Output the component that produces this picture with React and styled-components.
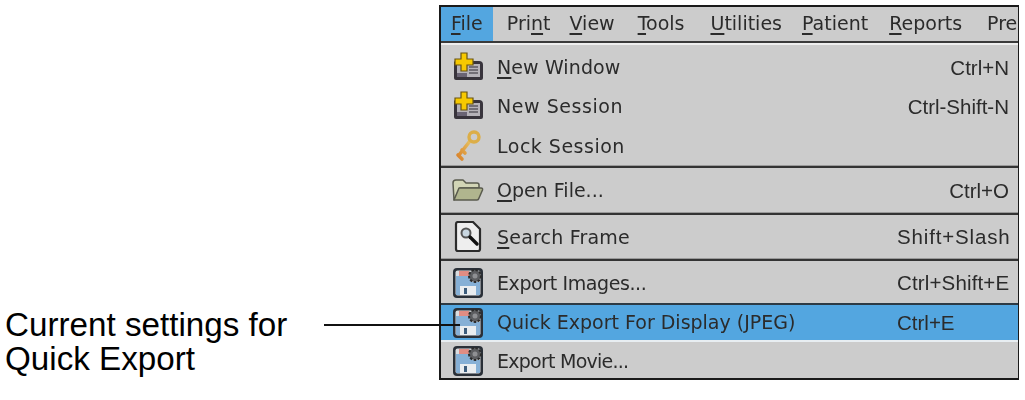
import React from 'react'
import styled, { createGlobalStyle } from 'styled-components'

const GlobalStyle = createGlobalStyle`
  html, body {
    margin: 0;
    padding: 0;
    background: #fff;
  }
`

const colors = {
  panel: '#cccccc',
  select: '#53a6e0',
  text: '#2b2b2b',
  line: '#1a1a1a',
}

const Page = styled.div`
  position: relative;
  width: 1025px;
  height: 400px;
  overflow: hidden;
  display: flex;
  align-items: flex-start;
  justify-content: space-between;
  padding: 5px 6px 0 5px;
  box-sizing: border-box;
  background: #fff;
`

const Caption = styled.div`
  margin-top: 303px;
  font-family: "Liberation Sans", Arial, sans-serif;
  font-size: 33.2px;
  line-height: 34px;
  color: #000;
`

const Leader = styled.div`
  position: absolute;
  left: 324px;
  top: 324px;
  width: 136px;
  height: 2px;
  background: #111;
  z-index: 2;
`

const Menu = styled.div`
  width: 580px;
  height: 375px;
  box-sizing: border-box;
  border: 2px solid ${colors.line};
  border-right-width: 1px;
  background: ${colors.panel};
  display: flex;
  flex-direction: column;
  overflow: hidden;
`

const MenuBar = styled.div`
  display: flex;
  height: 34px;
  flex: none;
  white-space: nowrap;
  border-bottom: 2px solid #3a3a3a;
  box-shadow: 0 2px 0 #eeeeee;
`

const BarItem = styled.div`
  flex: none;
  padding: 0 ${p => p.$right}px 2px ${p => p.$left}px;
  display: flex;
  align-items: center;
  font-family: "DejaVu Sans", sans-serif;
  font-size: 19px;
  color: ${colors.text};
  filter: blur(0.35px);
  background: ${p => (p.$active ? colors.select : 'transparent')};
`

const Key = styled.span`
  text-decoration: underline;
  text-underline-offset: 3px;
  text-decoration-thickness: 2px;
`

const Group = styled.div`
  padding-top: ${p => p.$top || 0}px;
  border-bottom: ${p => (p.$last ? 'none' : '2px solid #333333')};
  box-shadow: ${p => (p.$last ? 'none' : 'inset 0 -1px 0 #999')};
  display: flex;
  flex-direction: column;
`

const Row = styled.div`
  display: flex;
  align-items: center;
  flex: none;
  height: ${p => p.$h || 39}px;
  padding-left: 11px;
  background: ${p => (p.$selected ? colors.select : 'transparent')};
  box-shadow: ${p => (p.$selected ? 'inset 0 -2px 0 #e8eef2, inset 0 2px 0 #2d3a44' : 'none')};
`

const IconBox = styled.div`
  width: 32px;
  height: 32px;
  flex: none;
  margin-right: 13px;
  filter: blur(0.4px);
  svg {
    display: block;
  }
`

const Label = styled.div`
  width: 400px;
  flex: none;
  padding-bottom: 1px;
  font-family: "DejaVu Sans", sans-serif;
  font-size: 19px;
  letter-spacing: ${p => p.$track || 0}px;
  color: ${colors.text};
  filter: blur(0.35px);
  white-space: nowrap;
`

const Shortcut = styled.div`
  flex: 1;
  padding-right: 9px;
  text-align: ${p => (p.$left ? 'left' : 'right')};
  font-family: "Liberation Sans", Arial, sans-serif;
  font-size: 20.5px;
  letter-spacing: ${p => p.$track || 0}px;
  color: ${colors.text};
  filter: blur(0.25px);
  white-space: nowrap;
`

const PlusIcon = () => (
  <svg width="32" height="32" viewBox="0 0 32 32">
    <path d="M3 9h24a4 4 0 0 1 4 4v13a2 2 0 0 1-2 2H4a2 2 0 0 1-2-2V10z" fill="#38343c" />
    <rect x="5" y="12" width="23" height="13" fill="#b5b2b8" />
    <path d="M17 15h9M17 18h9M17 21h9" stroke="#5c5960" strokeWidth="1.5" />
    <path d="M5 21h10v4H5z" fill="#6a6474" />
    <path d="M9 1h6v6h6v6h-6v6H9v-6H3V7h6z" fill="#f7c900" stroke="#6a5510" strokeWidth="1.2" />
  </svg>
)

const KeyIcon = () => (
  <svg width="32" height="32" viewBox="0 0 32 32">
    <defs>
      <linearGradient id="keyMetal" x1="1" y1="0" x2="0" y2="1">
        <stop offset="0" stopColor="#e6c060" />
        <stop offset="1" stopColor="#d9822a" />
      </linearGradient>
    </defs>
    <path d="M18 11L7 25M6 25l4 4M10 20l3 3" stroke="url(#keyMetal)" strokeWidth="3.6" fill="none" strokeLinecap="round" />
    <circle cx="22" cy="7" r="5" fill="none" stroke="#dcae48" strokeWidth="3.4" />
  </svg>
)

const FolderIcon = () => (
  <svg width="32" height="32" viewBox="0 0 32 32">
    <path d="M1 8q0-3 3-3h7l3 3h11q2 0 2 2v3H8L2 25z" fill="#d2d5b6" stroke="#5a5b4e" strokeWidth="1.5" strokeLinejoin="round" />
    <path d="M2 25L7 13h22q2 0 1.500 2L27 23q-.5 2-2 2z" fill="#b0b58e" stroke="#5a5b4e" strokeWidth="1.5" strokeLinejoin="round" />
  </svg>
)

const SearchIcon = () => (
  <svg width="32" height="32" viewBox="0 0 32 32">
    <path d="M4 3q0-2 2-2h15l7 7v20q0 2-2 2H6q-2 0-2-2z" fill="#eeeeee" stroke="#2c2c2c" strokeWidth="2.2" strokeLinejoin="round" />
    <circle cx="14" cy="12" r="4.500" fill="#c8d6e0" stroke="#555" strokeWidth="2" />
    <path d="M18 16l7 7" stroke="#111" strokeWidth="3.4" strokeLinecap="round" />
  </svg>
)

const ExportIcon = () => (
  <svg width="32" height="32" viewBox="0 0 32 32">
    <rect x="1" y="1" width="30" height="30" rx="4" fill="#2a3038" />
    <rect x="3.500" y="3.500" width="25" height="25" rx="2" fill="#d9dcdf" />
    <path d="M4 9h16v6h8v13H4z" fill="#86b0d6" />
    <rect x="7" y="4" width="10" height="5" fill="#e08d84" />
    <rect x="8" y="19" width="16" height="9" fill="#e9edf0" />
    <rect x="12" y="21" width="3" height="6" fill="#3d5d7c" />
    <circle cx="23" cy="9" r="6" fill="#5c5d60" stroke="#2b2b2b" strokeWidth="2" strokeDasharray="2.500 1.500" />
    <circle cx="23" cy="9" r="2.500" fill="#8f9093" />
  </svg>
)

const barItems = [
  { key: 'file', left: 10, right: 10, active: true, label: <><Key>F</Key>ile</> },
  { key: 'print', left: 14, right: 6, label: <>Pri<Key>n</Key>t</> },
  { key: 'view', left: 13, right: 10, label: <><Key>V</Key>iew</> },
  { key: 'tools', left: 13, right: 13, label: <><Key>T</Key>ools</> },
  { key: 'utilities', left: 13, right: 7, label: <><Key>U</Key>tilities</> },
  { key: 'patient', left: 13, right: 8, label: <><Key>P</Key>atient</> },
  { key: 'reports', left: 13, right: 12, label: <><Key>R</Key>eports</> },
  { key: 'pre', left: 13, right: 0, label: 'Pre' },
]

const groups = [
  {
    top: 5,
    rows: [
      { icon: <PlusIcon />, label: <><Key>N</Key>ew Window</>, keys: 'Ctrl+N', track: 0.1 },
      { icon: <PlusIcon />, label: 'New Session', keys: 'Ctrl-Shift-N', track: 0.55 },
      { icon: <KeyIcon />, label: 'Lock Session', h: 40, track: 0.5 },
    ],
  },
  { rows: [{ icon: <FolderIcon />, label: <><Key>O</Key>pen File...</>, keys: 'Ctrl+O', h: 45 }] },
  { rows: [{ icon: <SearchIcon />, label: <><Key>S</Key>earch Frame</>, keys: 'Shift+Slash', h: 44, track: 0.2, keyTrack: 0.85 }] },
  {
    top: 2,
    last: true,
    rows: [
      { icon: <ExportIcon />, label: 'Export Images...', keys: 'Ctrl+Shift+E', h: 40, track: -0.4, keyTrack: 0.15 },
      { icon: <ExportIcon />, label: 'Quick Export For Display (JPEG)', keys: 'Ctrl+E', selected: true, h: 39, leftKeys: true },
      { icon: <ExportIcon />, label: 'Export Movie...', h: 38, track: -0.75 },
    ],
  },
]

const App = () => (
  <Page>
    <GlobalStyle />
    <Caption>
      Current settings for
      <br />
      Quick Export
    </Caption>
    <Leader />
    <Menu>
      <MenuBar>
        {barItems.map(item => (
          <BarItem key={item.key} $active={item.active} $left={item.left} $right={item.right}>
            <span>{item.label}</span>
          </BarItem>
        ))}
      </MenuBar>
      {groups.map((group, g) => (
        <Group key={g} $top={group.top} $last={group.last}>
          {group.rows.map((row, r) => (
            <Row key={r} $h={row.h} $selected={row.selected}>
              <IconBox>{row.icon}</IconBox>
              <Label $track={row.track}>{row.label}</Label>
              <Shortcut $left={row.leftKeys} $track={row.keyTrack}>{row.keys}</Shortcut>
            </Row>
          ))}
        </Group>
      ))}
    </Menu>
  </Page>
)

export default App
